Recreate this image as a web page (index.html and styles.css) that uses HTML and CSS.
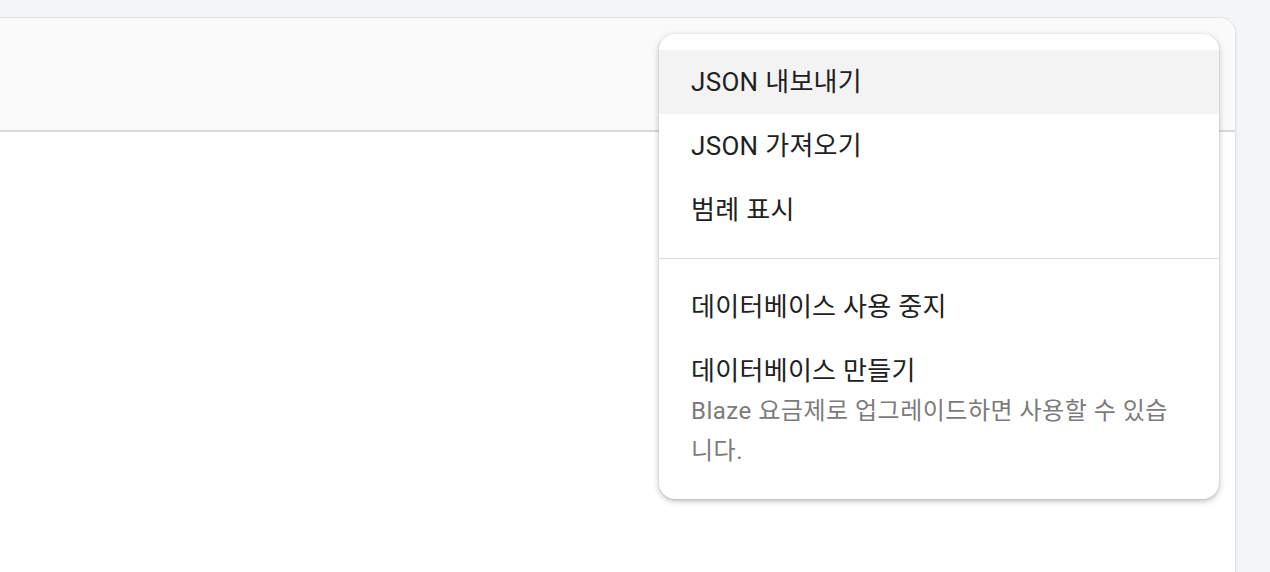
FILE: index.html
```html
<!DOCTYPE html>
<html lang="ko">
<head>
    <meta charset="UTF-8">
    <meta name="viewport" content="width=device-width, initial-scale=1.0">
    <title>Database</title>
    <link rel="stylesheet" href="styles.css">
</head>
<body>
    <div class="page">
        <div class="card">
            <!-- Card header (toolbar area) -->
            <div class="card-header"></div>
            <div class="card-body"></div>

            <!-- Overflow menu -->
            <div class="menu">
                <div class="menu-group">
                    <div class="menu-item active">JSON 내보내기</div>
                    <div class="menu-item">JSON 가져오기</div>
                    <div class="menu-item">범례 표시</div>
                </div>
                <div class="menu-divider"></div>
                <div class="menu-group">
                    <div class="menu-item">데이터베이스 사용 중지</div>
                    <div class="menu-item two-line">
                        <div class="item-title">데이터베이스 만들기</div>
                        <div class="item-sub">Blaze 요금제로 업그레이드하면 사용할 수 있습니다.</div>
                    </div>
                </div>
            </div>
        </div>
    </div>
</body>
</html>
```

FILE: styles.css
```css
html, body {
    margin: 0;
    padding: 0;
    height: 100%;
    overflow: hidden;
}
body {
    font-family: Roboto, "Noto Sans CJK KR", sans-serif;
    background-color: #f4f5f7;
    color: #212121;
}
.page {
    padding: 17px 34px 0 0;
}
.card {
    position: relative;
    margin-left: -20px;
    height: 620px;
    background-color: #fff;
    border: 1px solid #e3e3e3;
    border-radius: 16px;
    box-shadow: 0 1px 3px rgba(0, 0, 0, 0.08);
}
.card-header {
    height: 112px;
    background-color: #fafafa;
    border-bottom: 2px solid #dadada;
    border-radius: 16px 16px 0 0;
}
.menu {
    position: absolute;
    top: 16px;
    right: 16px;
    width: 560px;
    padding: 16px 0;
    background-color: #fff;
    border-radius: 16px;
    box-shadow: 0 2px 6px rgba(0, 0, 0, 0.25), 0 1px 2px rgba(0, 0, 0, 0.1);
}
.menu-item {
    height: 64px;
    line-height: 64px;
    padding: 0 32px;
    font-size: 26px;
    letter-spacing: 0.3px;
    white-space: nowrap;
}
.menu-item.active {
    background-color: #f3f3f3;
}
.menu-item.two-line {
    height: auto;
    line-height: 40px;
    padding: 12px 32px;
    white-space: normal;
}
.item-sub {
    font-size: 24px;
    letter-spacing: 0.5px;
    color: #7b7b7b;
}
.menu-divider {
    height: 1px;
    margin: 16px 0;
    background-color: #dedede;
}
```
